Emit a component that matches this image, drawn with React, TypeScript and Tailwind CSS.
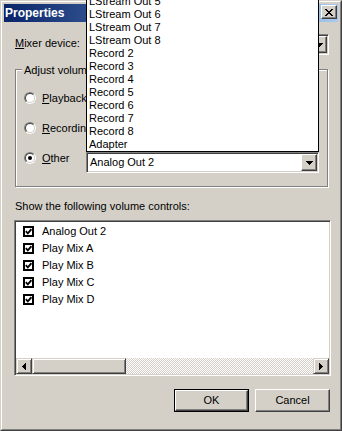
import React from "react";

const raised =
  "border border-t-white border-l-white border-r-[#404040] border-b-[#404040] shadow-[inset_-1px_-1px_0_#808080] bg-[#d4d0c8]";
const sbRaised =
  "border border-t-[#d4d0c8] border-l-[#d4d0c8] border-r-[#404040] border-b-[#404040] shadow-[inset_1px_1px_0_white,inset_-1px_-1px_0_#808080] bg-[#d4d0c8]";
const sunken =
  "border border-t-[#808080] border-l-[#808080] border-r-white border-b-white shadow-[inset_1px_1px_0_#404040,inset_-1px_-1px_0_#d4d0c8] bg-white p-[1px]";

function DownArrow() {
  return (
    <svg width="7" height="4" shapeRendering="crispEdges">
      <rect x="0" y="0" width="7" height="1" fill="black" />
      <rect x="1" y="1" width="5" height="1" fill="black" />
      <rect x="2" y="2" width="3" height="1" fill="black" />
      <rect x="3" y="3" width="1" height="1" fill="black" />
    </svg>
  );
}

function SideArrow({ dir }: { dir: "left" | "right" }) {
  const cols = [1, 3, 5, 7];
  return (
    <svg width="4" height="7" shapeRendering="crispEdges">
      {cols.map((h, i) => (
        <rect
          key={i}
          x={dir === "left" ? i : 3 - i}
          y={(7 - h) / 2}
          width="1"
          height={h}
          fill="black"
        />
      ))}
    </svg>
  );
}

function CloseGlyph() {
  const rows = [
    "xx....xx",
    ".xx..xx.",
    "..xxxx..",
    "...xx...",
    "..xxxx..",
    ".xx..xx.",
    "xx....xx",
  ];
  const rects: React.ReactNode[] = [];
  rows.forEach((r, y) =>
    r.split("").forEach((c, x) => {
      if (c === "x") rects.push(<rect key={`${x}-${y}`} x={x} y={y} width="1" height="1" fill="black" />);
    })
  );
  return (
    <svg width="8" height="7" shapeRendering="crispEdges">
      {rects}
    </svg>
  );
}

function Radio({ checked }: { checked?: boolean }) {
  return (
    <div className="w-[12px] h-[12px] rounded-full border border-t-[#808080] border-l-[#808080] border-r-white border-b-white shrink-0">
      <div className="w-full h-full rounded-full border border-t-[#404040] border-l-[#404040] border-r-[#d4d0c8] border-b-[#d4d0c8] bg-white flex items-center justify-center">
        {checked && <div className="w-[4px] h-[4px] rounded-full bg-black" />}
      </div>
    </div>
  );
}

function Check() {
  return (
    <div className="w-[11px] h-[11px] border-2 border-black bg-white shrink-0 flex items-center justify-center">
      <svg width="7" height="7" viewBox="0 0 7 7">
        <polyline points="0.8,3.2 2.8,5.3 6.4,1.2" fill="none" stroke="black" strokeWidth="1.8" />
      </svg>
    </div>
  );
}

function ComboButton() {
  return (
    <div className={`${raised} w-[16px] h-[17px] flex items-center justify-center shrink-0`}>
      <DownArrow />
    </div>
  );
}

const popupItems = [
  "LStream Out 5",
  "LStream Out 6",
  "LStream Out 7",
  "LStream Out 8",
  "Record 2",
  "Record 3",
  "Record 4",
  "Record 5",
  "Record 6",
  "Record 7",
  "Record 8",
  "Adapter",
];

const controls = ["Analog Out 2", "Play Mix A", "Play Mix B", "Play Mix C", "Play Mix D"];

export default function App() {
  return (
    <div className="w-[342px] h-[431px] overflow-hidden [font-family:'Liberation_Sans',Arial,sans-serif] text-[11px] leading-[13px] text-black">
      <div className="w-full h-full border border-t-[#d4d0c8] border-l-[#d4d0c8] border-r-[#404040] border-b-[#404040]">
        <div className="w-full h-full border border-t-white border-l-white border-r-[#808080] border-b-[#808080] bg-[#d4d0c8] p-[2px] flex flex-col">
          {/* Caption */}
          <div className="h-[18px] flex items-start bg-linear-to-r from-[#0a246a] to-[#a6caf0] shrink-0">
            <div className="pl-[1px] h-[18px] flex items-center text-white font-bold text-[12px] flex-1">Properties</div>
            <div className={`${raised} mt-[1px] mr-[1px] w-[16px] h-[14px] flex items-center justify-center`}>
              <CloseGlyph />
            </div>
          </div>

          {/* Mixer device */}
          <div className="mt-[12px] h-[21px] flex items-start">
            <div className="ml-[11px] w-[71px] mt-[3px]">
              <u>M</u>ixer device:
            </div>
            <div className={`${sunken} w-[243px] h-[21px] flex`}>
              <div className="flex-1" />
              <ComboButton />
            </div>
          </div>

          {/* Group box */}
          <div className="relative mt-[14px] ml-[11px] w-[313px] h-[118px] border border-[#808080] shadow-[inset_1px_1px_0_white,1px_1px_0_white] pt-[22px] pl-[8px] flex flex-col gap-[17px]">
            <span className="absolute left-[6px] top-[-6px] px-[2px] bg-[#d4d0c8]">Adjust volume for</span>
            <div className="flex items-start gap-[6px] h-[13px]">
              <Radio />
              <span>
                <u>P</u>layback
              </span>
            </div>
            <div className="flex items-start gap-[6px] h-[13px]">
              <Radio />
              <span>
                <u>R</u>ecording
              </span>
            </div>
            <div className="flex items-start">
              <Radio checked />
              <span className="ml-[6px] w-[44px]">
                <u>O</u>ther
              </span>
              <div className="relative w-[233px]">
                <div className="absolute left-0 bottom-full w-full z-10 border border-black bg-white">
                  {popupItems.map((t) => (
                    <div key={t} className="h-[13px] leading-[13px] pl-[2px] whitespace-nowrap">
                      {t}
                    </div>
                  ))}
                </div>
                <div className={`${sunken} w-full h-[21px] flex items-center`}>
                  <div className="flex-1 pl-[2px]">Analog Out 2</div>
                  <ComboButton />
                </div>
              </div>
            </div>
          </div>

          {/* Label */}
          <div className="mt-[13px] ml-[11px]">Show the following volume controls:</div>

          {/* List box */}
          <div className={`${sunken} mt-[7px] ml-[10px] w-[317px] h-[156px] flex flex-col`}>
            <div className="flex-1 pt-[1px]">
              {controls.map((c) => (
                <div key={c} className="h-[17px] flex items-center pl-[7px] gap-[8px]">
                  <Check />
                  <span>{c}</span>
                </div>
              ))}
            </div>
            <div className="h-[16px] flex shrink-0">
              <div className={`${sbRaised} w-[16px] h-[16px] flex items-center justify-center`}>
                <SideArrow dir="left" />
              </div>
              <div className={`${sbRaised} w-[94px] h-[16px]`} />
              <div className="flex-1 bg-[repeating-conic-gradient(#d4d0c8_0_25%,white_0_50%)] bg-[length:2px_2px]" />
              <div className={`${sbRaised} w-[16px] h-[16px] flex items-center justify-center`}>
                <SideArrow dir="right" />
              </div>
            </div>
          </div>

          {/* Buttons */}
          <div className="mt-[13px] flex justify-end gap-[6px] pr-[8px]">
            <div className="w-[75px] h-[23px] border border-black">
              <div className={`${raised} w-full h-full flex items-center justify-center`}>OK</div>
            </div>
            <div className={`${raised} w-[75px] h-[23px] flex items-center justify-center`}>Cancel</div>
          </div>
        </div>
      </div>
    </div>
  );
}
